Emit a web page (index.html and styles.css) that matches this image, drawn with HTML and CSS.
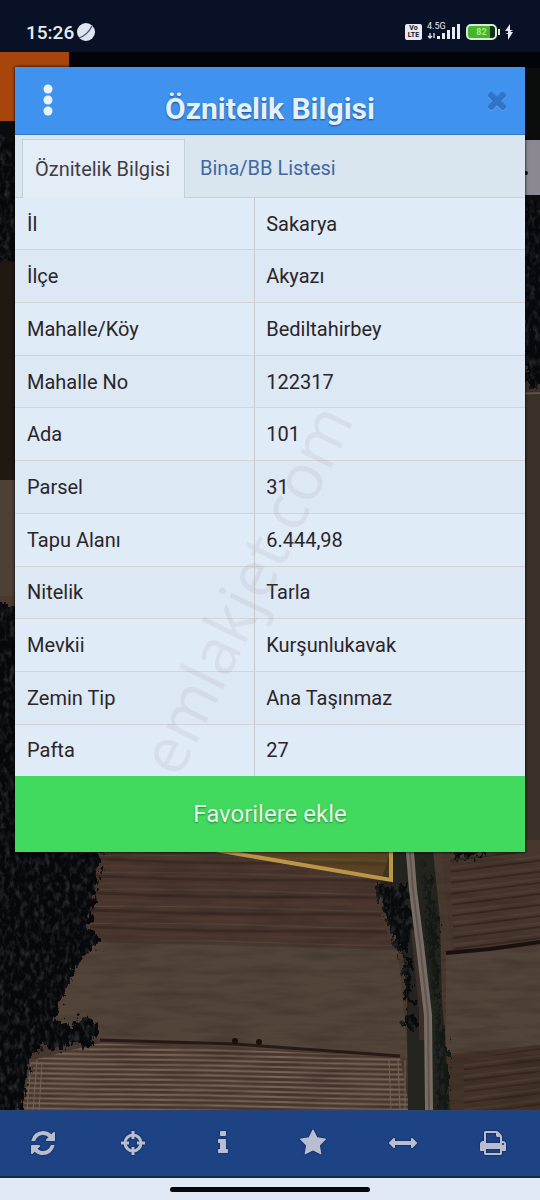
FILE: index.html
```html
<!DOCTYPE html>
<html lang="tr">
<head>
  <meta charset="UTF-8" />
  <meta name="viewport" content="width=device-width, initial-scale=1" />
  <title>Öznitelik Bilgisi</title>
  <link rel="stylesheet" href="styles.css">
</head>

<body>
  <!-- STATUS BAR -->
  <div class="status-bar">
    <div class="status-left">
      <span>15:26</span>
      <svg width="18" height="18" viewBox="0 0 18 18"><circle cx="9" cy="9" r="9" fill="#dfe5f0"/><path d="M2 15c6-2 10-6 13-12" stroke="#4a536b" stroke-width="1.3" fill="none"/></svg>
    </div>
    <div class="status-right">
      <span class="volte">Vo<br>LTE</span>
      <span class="signal">
        <span class="network">4.5G</span>
        <svg width="34" height="16" viewBox="0 0 34 16" fill="#e6eaf2"><path d="M3 9v5M1 12l2 2 2-2M7 14V9" stroke="#e6eaf2" stroke-width="1.3" fill="none"/><path d="M10 12h3v3h-3zM15 9h3v6h-3zM20 6h3v9h-3zM25 3h3v12h-3zM30 0h3v15h-3z"/></svg>
      </span>
      <span class="battery">82</span>
      <svg width="10" height="16" viewBox="0 0 10 16"><path d="M6 0L1 7h3v2L1 10h3v6l5-8H6l3-2H6z" fill="#e6eaf2"/></svg>
    </div>
  </div>

  <main>
    <!-- SATELLITE MAP -->
    <svg class="map" viewBox="0 52 540 1058" preserveAspectRatio="xMidYMin slice" aria-hidden="true">
      <defs>
        <pattern id="furrow" width="300" height="17" patternUnits="userSpaceOnUse" patternTransform="rotate(1)">
          <path d="M0 3q75 2 150 0t150 0" stroke="#58463b" stroke-width="1" fill="none"/>
          <path d="M0 8q75-2 150 0t150 0" stroke="#3d2a23" stroke-width="3" fill="none"/>
          <path d="M0 14h300" stroke="#50382f" stroke-width="2"/>
        </pattern>
        <pattern id="furrow-light" width="300" height="5" patternUnits="userSpaceOnUse" patternTransform="rotate(1)">
          <path d="M0 2q75 1 150 0t150 0" stroke="#78655a" stroke-width="2" fill="none"/>
        </pattern>
        <pattern id="furrow-right" width="100" height="11" patternUnits="userSpaceOnUse" patternTransform="rotate(-7)">
          <path d="M0 3h100" stroke="#58443b" stroke-width="1"/>
          <path d="M0 7h100" stroke="#38281f" stroke-width="2"/>
        </pattern>
        <filter id="trees" x="-10%" y="-2%" width="120%" height="104%" color-interpolation-filters="sRGB">
          <feTurbulence type="fractalNoise" baseFrequency="0.2 0.12" numOctaves="3" seed="4" result="n"/>
          <feDisplacementMap in="SourceGraphic" in2="n" scale="20" xChannelSelector="R" yChannelSelector="G" result="shape"/>
          <feColorMatrix in="n" type="matrix" values="0 0 0 0 .15  0 0 0 0 .16  0 0 0 0 .18  2.6 0 0 0 -1.15" result="leaf"/>
          <feComposite in="leaf" in2="shape" operator="in" result="leaves"/>
          <feMerge><feMergeNode in="shape"/><feMergeNode in="leaves"/></feMerge>
        </filter>
        <filter id="grain" x="0" y="0" width="100%" height="100%" color-interpolation-filters="sRGB">
          <feTurbulence type="fractalNoise" baseFrequency="0.02 0.12" numOctaves="3" seed="8"/>
          <feColorMatrix type="matrix" values="0 0 0 0 .08  0 0 0 0 .05  0 0 0 0 .04  1 0 0 0 -.4"/>
        </filter>
      </defs>

      <rect y="52" width="540" height="1058" fill="#493a31"/>
      <rect y="52" width="540" height="270" fill="#0b0c0c"/>
      <rect y="210" width="30" height="270" fill="#1e1712"/>
      <rect y="480" width="30" height="116" fill="#4d4136"/>
      <rect x="510" y="320" width="30" height="540" fill="#3b3027"/>
      <path d="M510 394l30-1" stroke="#5e5144" stroke-width="2"/>

      <!-- fields -->
      <path d="M90 840H392L384 880L376 900L392 948L90 938z" fill="#49372e"/>
      <path d="M90 840H392L384 880L376 900L392 948L90 938z" fill="url(#furrow)"/>
      <path d="M90 942L398 950L408 1058L40 1035z" fill="#524439"/>
      <path d="M20 1110L32 1060L100 1043L400 1057L410 1110z" fill="#4b392f"/>
      <path d="M20 1110L32 1060L100 1043L400 1057L410 1110z" fill="url(#furrow-light)"/>
      <path d="M100 1040L235 1044L400 1056" stroke="#281b16" stroke-width="3" fill="none"/>
      <path d="M27 1110L31 1062M33 1110L37 1060M39 1110L42 1062M389 1060L391 1110M398 1060L400 1110M405 1060V1110" stroke="#76655a" stroke-width="1"/>
      <circle cx="235" cy="1041" r="3" fill="#17110f"/>
      <circle cx="259" cy="1042" r="3" fill="#17110f"/>
      <path d="M440 840H540V946L452 950z" fill="#47372e"/>
      <path d="M450 852H540V946L454 950z" fill="url(#furrow-right)"/>
      <path d="M446 954L540 946V1045L446 1054z" fill="#524439"/>
      <path d="M446 1056L540 1045V1110H446z" fill="#433328"/>
      <path d="M464 1060L540 1047V1110H464z" fill="url(#furrow-right)"/>
      <path d="M446 953L490 949L540 942" stroke="#1a1210" stroke-width="4" fill="none"/>
      <rect y="852" width="540" height="258" filter="url(#grain)" opacity=".4"/>

      <!-- road with hedges -->
      <path d="M394 840H432L440 920L442 1000L446 1050L450 1110H408L407 1000L402 940L378 890z" fill="#23241e"/>
      <g filter="url(#trees)" fill="#090b0c">
        <path d="M376 885h30l6 45l-10 28l-12-30z"/>
        <path d="M424 860l14 60v80l10 50v60h-12v-100l-10-70z" fill="#131812"/>
        <path d="M404 955l8 5v46l-8-6z"/>
        <circle cx="410" cy="1022" r="7"/>
        <path d="M452 845h28v12h-28z"/>
      </g>
      <path d="M414 930L422 1010L422 1040" stroke="#3d2f28" stroke-width="6" fill="none"/>
      <path d="M409 840L413 890L420 945L428 1015L429 1110" stroke="#786d66" stroke-width="8" fill="none"/>
      <path d="M409 840L413 890L420 945L428 1015L429 1110" stroke="#5f554e" stroke-width="2" fill="none"/>

      <!-- woods -->
      <g filter="url(#trees)" fill="#07080c">
        <path d="M-20 605H40V840H101L97 890L88 925L96 945L76 965L68 988L56 1010L54 1025L38 1050L28 1064L20 1125H-20z"/>
        <circle cx="91" cy="940" r="9"/>
        <circle cx="54" cy="1035" r="16"/>
        <circle cx="83" cy="1032" r="14"/>
        <path d="M-10 140H20V260H-10zM524 200H550V385H524z"/>
      </g>

      <!-- selected parcel -->
      <path d="M180 780L391 780V880L180 844z" fill="#8a6510" fill-opacity=".28"/>
      <path d="M391 780V880L180 844" stroke="#ba9648" stroke-width="4" fill="none"/>

      <!-- map controls behind the dialog -->
      <rect y="52" width="540" height="16" fill="#02040a"/>
      <rect y="52" width="69" height="69" fill="#a7450c"/>
      <rect x="480" y="140" width="60" height="55" fill="#8c8790"/>
      <circle cx="526" cy="173" r="2" fill="#111"/>
    </svg>

    <!-- DIALOG -->
    <section class="dialog" aria-labelledby="dialog-title">
      <header>
        <button class="menu-btn" type="button" aria-label="Menü">
          <svg width="10" height="32" viewBox="0 0 10 32" fill="#e9f3fd"><circle cx="5" cy="5" r="4.500"/><circle cx="5" cy="16" r="4.500"/><circle cx="5" cy="27" r="4.500"/></svg>
        </button>
        <h1 id="dialog-title">Öznitelik Bilgisi</h1>
        <button class="close-btn" type="button" aria-label="Kapat">
          <svg width="28" height="28" viewBox="0 0 1792 1792" fill="#3273c6"><path d="M1490 1322q0 40-28 68l-136 136q-28 28-68 28t-68-28l-294-294-294 294q-28 28-68 28t-68-28l-136-136q-28-28-28-68t28-68l294-294-294-294q-28-28-28-68t28-68l136-136q28-28 68-28t68 28l294 294 294-294q28-28 68-28t68 28l136 136q28 28 28 68t-28 68l-294 294 294 294q28 28 28 68z"/></svg>
        </button>
      </header>

      <nav class="tabs">
        <a href="#bilgi" class="active">Öznitelik Bilgisi</a>
        <a href="#liste">Bina/BB Listesi</a>
      </nav>

      <table id="bilgi">
        <tr><th scope="row">İl</th><td>Sakarya</td></tr>
        <tr><th scope="row">İlçe</th><td>Akyazı</td></tr>
        <tr><th scope="row">Mahalle/Köy</th><td>Bediltahirbey</td></tr>
        <tr><th scope="row">Mahalle No</th><td>122317</td></tr>
        <tr><th scope="row">Ada</th><td>101</td></tr>
        <tr><th scope="row">Parsel</th><td>31</td></tr>
        <tr><th scope="row">Tapu Alanı</th><td>6.444,98</td></tr>
        <tr><th scope="row">Nitelik</th><td>Tarla</td></tr>
        <tr><th scope="row">Mevkii</th><td>Kurşunlukavak</td></tr>
        <tr><th scope="row">Zemin Tip</th><td>Ana Taşınmaz</td></tr>
        <tr><th scope="row">Pafta</th><td>27</td></tr>
      </table>

      <button class="favorite" type="button">Favorilere ekle</button>
      <span class="watermark">emlakjet.com</span>
    </section>
  </main>

  <!-- TOOLBAR -->
  <div class="toolbar">
    <button type="button" aria-label="Yenile"><svg viewBox="0 0 1792 1792"><path d="M1639 1056q0 5-1 7-64 268-268 434.500t-478 166.500q-146 0-282.500-55t-243.500-157l-129 129q-19 19-45 19t-45-19-19-45v-448q0-26 19-45t45-19h448q26 0 45 19t19 45-19 45l-137 137q71 66 161 102t187 36q134 0 250-65t186-179q11-17 53-117 8-23 30-23h192q13 0 22.500 9.500t9.500 22.500zm25-800v448q0 26-19 45t-45 19h-448q-26 0-45-19t-19-45 19-45l138-138q-148-137-349-137-134 0-250 65t-186 179q-11 17-53 117-8 23-30 23h-199q-13 0-22.500-9.500t-9.500-22.500v-7q65-268 270-434.500t480-166.500q146 0 284 55.500t245 156.500l130-129q19-19 45-19t45 19 19 45z"/></svg></button>
    <button type="button" aria-label="Konum"><svg viewBox="0 0 28 28"><circle cx="14" cy="14" r="8" fill="none" stroke="#b9bdd0" stroke-width="3"/><path d="M12.500 2h3v8h-3zM12.500 18h3v8h-3zM2 12.500h8v3H2zM18 12.500h8v3h-8z"/></svg></button>
    <button type="button" aria-label="Bilgi"><svg viewBox="0 0 1792 1792"><path d="M1216 1344v128q0 26-19 45t-45 19h-512q-26 0-45-19t-19-45v-128q0-26 19-45t45-19h64v-384h-64q-26 0-45-19t-19-45v-128q0-26 19-45t45-19h384q26 0 45 19t19 45v576h64q26 0 45 19t19 45zm-128-1152v192q0 26-19 45t-45 19h-256q-26 0-45-19t-19-45v-192q0-26 19-45t45-19h256q26 0 45 19t19 45z"/></svg></button>
    <button type="button" aria-label="Favoriler"><svg viewBox="0 0 1792 1792"><path d="M1728 647q0 22-26 48l-363 354 86 500q1 7 1 20 0 21-10.500 35.500t-30.500 14.500q-19 0-40-12l-449-236-449 236q-22 12-40 12-21 0-31.500-14.500t-10.500-35.500q0-6 2-20l86-500-364-354q-25-27-25-48 0-37 56-46l502-73 225-455q19-41 49-41t49 41l225 455 502 73q56 9 56 46z"/></svg></button>
    <button type="button" aria-label="Ölçüm"><svg viewBox="0 0 1792 1792"><path d="M1792 896q0 26-19 45l-256 256q-19 19-45 19t-45-19-19-45v-128h-1024v128q0 26-19 45t-45 19-45-19l-256-256q-19-19-19-45t19-45l256-256q19-19 45-19t45 19 19 45v128h1024v-128q0-26 19-45t45-19 45 19l256 256q19 19 19 45z"/></svg></button>
    <button type="button" aria-label="Yazdır"><svg viewBox="0 0 1792 1792"><path d="M448 1536h896v-256h-896v256zm0-640h896v-384h-160q-40 0-68-28t-28-68v-160h-640v640zm1152 64q0-26-19-45t-45-19-45 19-19 45 19 45 45 19 45-19 19-45zm128 0v416q0 13-9.500 22.500t-22.500 9.500h-224v160q0 40-28 68t-68 28h-960q-40 0-68-28t-28-68v-160h-224q-13 0-22.500-9.500t-9.500-22.500v-416q0-79 56.500-135.500t135.500-56.500h64v-544q0-40 28-68t68-28h672q40 0 88 20t76 48l152 152q28 28 48 76t20 88v256h64q79 0 135.500 56.500t56.500 135.500z"/></svg></button>
  </div>

  <!-- GESTURE BAR -->
  <div class="gesture-bar"><span></span></div>
</body>
</html>
```
FILE: styles.css
```css
/* BASE STYLES */
* { box-sizing: border-box; }
body {
  margin: 0;
  min-height: 100vh;
  display: flex;
  flex-direction: column;
  font-family: Roboto, sans-serif;
  background: #0b0c0c;
  color: #2b2529;
}
button {
  border: 0;
  padding: 0;
  background: none;
  font-family: inherit;
  cursor: pointer;
}
svg { display: block; }

/* STATUS BAR */
.status-bar {
  display: flex;
  justify-content: space-between;
  align-items: center;
  height: 52px;
  padding: 12px 26px 0;
  background: #091126;
  color: #e6eaf2;
}
.status-left,
.status-right { display: flex; align-items: center; }
.status-left { gap: 3px; font-size: 19px; font-weight: 500; }
.status-right { gap: 5px; }
.volte {
  width: 17px;
  padding: 1px 0;
  border-radius: 2px;
  background: #e6eaf2;
  color: #101729;
  font-size: 7px;
  font-weight: 700;
  line-height: 7px;
  text-align: center;
}
.signal { position: relative; }
.network {
  position: absolute;
  top: -2px;
  left: 0;
  font-size: 9px;
  line-height: 8px;
}
.battery {
  position: relative;
  width: 31px;
  margin-right: 2px;
  border: 2px solid #d5ecd0;
  border-radius: 5px;
  background: linear-gradient(90deg, #46b52b 80%, #12301a 80%);
  color: #a5ec8a;
  font-size: 9px;
  font-weight: 700;
  line-height: 12px;
  text-align: center;
}
.battery::after {
  content: "";
  position: absolute;
  top: 3px;
  right: -5px;
  width: 2px;
  height: 6px;
  background: #d5ecd0;
}

/* MAP */
main {
  position: relative;
  flex: 1;
  padding: 15px 15px 24px;
  overflow: hidden;
}
.map {
  position: absolute;
  top: 0;
  left: 0;
  width: 100%;
  height: 100%;
}

/* DIALOG */
.dialog {
  position: relative;
  overflow: hidden;
  background: #dfebf7;
  box-shadow: 0 0 3px #000;
}
.dialog header {
  display: flex;
  justify-content: space-between;
  height: 68px;
  padding: 0 14px;
  border-bottom: 1px solid #3578c4;
  background: #3f93ef;
}
.menu-btn,
.close-btn {
  display: flex;
  align-items: center;
  width: 42px;
  height: 66px;
}
.menu-btn { padding-left: 14px; }
.close-btn { justify-content: flex-end; }
.close-btn svg { filter: drop-shadow(0 1px 0 #5ba5f3); }
h1 {
  margin: 0;
  padding-top: 17px;
  color: #e4f1fd;
  font-size: 30px;
  font-weight: 700;
  line-height: 50px;
  text-shadow: 0 1px 2px #1d4c86;
}

/* TABS */
.tabs {
  display: flex;
  height: 63px;
  padding: 4px 0 0 7px;
  border-bottom: 1px solid #c6d0db;
  background: #d9e5ef;
}
.tabs a {
  padding: 0 15px;
  color: #43689f;
  font-size: 20px;
  line-height: 58px;
  text-decoration: none;
}
.tabs a.active {
  height: 59px;
  padding: 0 14px 0 12px;
  border: 1px solid #c6d0db;
  border-bottom: 0;
  background: #e2edf8;
  color: #443b42;
}

/* DETAILS TABLE */
table {
  width: 100%;
  height: 578px;
  border-collapse: collapse;
  font-size: 20px;
}
th,
td {
  padding: 0 12px;
  border-bottom: 1px solid #d3d3da;
  font-weight: 400;
  text-align: left;
}
td { padding: 0 11px; }
th {
  width: 47%;
  border-right: 1px solid #c6cbd3;
}
tr:nth-child(even) { background: #dce8f4; }
tr:last-child th,
tr:last-child td { border-bottom: 0; }

.favorite {
  display: block;
  width: 100%;
  height: 76px;
  background: #42d95f;
  color: #e3fbe9;
  font-size: 24px;
  text-shadow: 0 1px 2px #22863a;
}
.watermark {
  position: absolute;
  top: 522px;
  left: 230px;
  color: rgba(150, 130, 140, 0.12);
  font-family: "Open Sans", sans-serif;
  font-size: 64px;
  font-weight: 400;
  line-height: 1;
  transform: translate(-50%, -50%) rotate(-64deg);
  pointer-events: none;
}

/* TOOLBAR */
.toolbar {
  display: flex;
  height: 68px;
  border-top: 1px solid #2d4468;
  border-bottom: 2px solid #152a38;
  background: #1e4385;
}
.toolbar button {
  flex: 1;
  display: flex;
  align-items: center;
  justify-content: center;
  padding: 0 4px 2px 0;
}
.toolbar svg {
  width: 28px;
  height: 28px;
  fill: #b9bdd0;
  filter: drop-shadow(0 0 1px #0c1f45);
}

/* GESTURE BAR */
.gesture-bar {
  display: flex;
  align-items: center;
  justify-content: center;
  height: 22px;
  background: #e1e9f6;
}
.gesture-bar span {
  width: 37%;
  height: 5px;
  border-radius: 3px;
  background: #08060c;
}
```
